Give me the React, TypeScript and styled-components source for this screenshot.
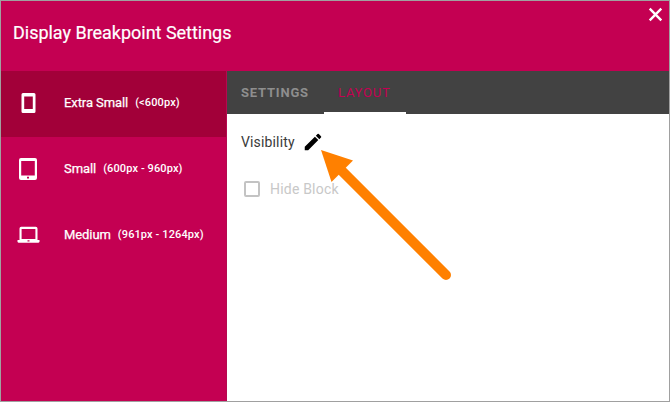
import React from "react";
import styled, { createGlobalStyle } from "styled-components";

const GlobalStyle = createGlobalStyle`
  * { box-sizing: border-box; }
  body { margin: 0; font-family: Roboto, "Liberation Sans", sans-serif; }
`;

const Dialog = styled.div`
  position: relative;
  display: flex;
  flex-direction: column;
  width: 670px;
  height: 402px;
  border: 1px solid #a0a0a0;
  background: #fff;
  overflow: hidden;
`;

const Header = styled.header`
  display: flex;
  justify-content: space-between;
  align-items: flex-start;
  height: 70px;
  flex: none;
  padding: 5px 6px 0 12px;
  background: #c40052;
`;

const Title = styled.h1`
  margin: 16px 0 0;
  font-size: 18px;
  line-height: 22px;
  font-weight: 400;
  letter-spacing: -0.02px;
  color: #fff;
  -webkit-text-stroke: 0.2px #fff;
`;

const CloseButton = styled.button`
  display: flex;
  padding: 0;
  border: 0;
  background: none;
`;

const Body = styled.div`
  display: flex;
  flex: 1;
`;

const Sidebar = styled.nav`
  width: 226px;
  background: #c40052;
  border-right: 1px solid #b6094f;
`;

const SidebarItem = styled.div<{ $active?: boolean }>`
  display: flex;
  align-items: center;
  height: 66px;
  padding: 0 0 2px 16px;
  color: #fff;
  background: ${(p) => (p.$active ? "#a20039" : "transparent")};
`;

const ItemIcon = styled.svg`
  width: 24px;
  height: 24px;
  margin-right: 23px;
  fill: #fff;
  fill-rule: evenodd;
`;

const ItemLabel = styled.span`
  font-size: 13px;
  font-weight: 400;
  letter-spacing: -0.08px;
  line-height: 20px;
  -webkit-text-stroke: 0.25px #fff;
`;

const ItemRange = styled.span`
  margin-left: 7px;
  font-size: 11px;
  font-weight: 500;
  letter-spacing: 0.12px;
  line-height: 20px;
`;

const Content = styled.main`
  flex: 1;
`;

const Tabs = styled.div`
  display: flex;
  height: 43px;
  background: #424242;
`;

const Tab = styled.div<{ $active?: boolean }>`
  display: flex;
  align-items: center;
  padding: ${(p) => (p.$active ? "2px 0 0 14px" : "0 0 0 14px")};
  width: ${(p) => (p.$active ? "82px" : "97px")};
  font-size: 13px;
  letter-spacing: 0.8px;
  font-weight: ${(p) => (p.$active ? 400 : 700)};
  color: ${(p) => (p.$active ? "#c40052" : "#8e8e8e")};
  border-bottom: ${(p) => (p.$active ? "2px solid #fff" : "0")};
`;

const Panel = styled.section`
  padding: 17px 14px;
`;

const SectionHeading = styled.div`
  display: flex;
  align-items: center;
  gap: 7px;
  height: 22px;
  font-size: 14px;
  letter-spacing: 0.15px;
  color: #3a3a3a;
`;

const CheckRow = styled.div`
  display: flex;
  align-items: center;
  height: 22px;
  margin-top: 25px;
  padding-left: 3px;
  gap: 10px;
  font-size: 14px;
  letter-spacing: 0.2px;
  color: #c8c8c8;
`;

const CheckBox = styled.span`
  width: 16px;
  height: 16px;
  border: 2px solid #c3c3c3;
  border-radius: 2px;
`;

const Arrow = styled.svg`
  position: absolute;
  left: -1px;
  top: -1px;
  pointer-events: none;
`;

const items = [
  {
    label: "Extra Small",
    range: "(<600px)",
    icon: "M6 2h11a1.5 1.5 0 0 1 1.5 1.5v17a1.5 1.5 0 0 1-1.5 1.5H6a1.500 1.500 0 0 1-1.500-1.500v-17A1.500 1.500 0 0 1 6 2zM7.200 5.500v12.500h8.600V5.500z",
  },
  {
    label: "Small",
    range: "(600px - 960px)",
    icon: "M4 1h14a2 2 0 0 1 2 2v18a2 2 0 0 1-2 2H4a2 2 0 0 1-2-2V3a2 2 0 0 1 2-2zM4.200 4v14.500h13.600V4zM10 19.700v1.900h2v-1.900z",
  },
  {
    label: "Medium",
    range: "(961px - 1264px)",
    icon: "M4.300 3.800h14.400A1.800 1.800 0 0 1 20.500 5.600v11.300h2V19l-1 .8h-20l-1-.8v-2.100h2V5.600A1.800 1.800 0 0 1 4.300 3.800zM4.600 5.900v10.100h13.800V5.900zM10.500 17.200v1.300h2v-1.300z",
  },
];

export default function App() {
  return (
    <>
      <GlobalStyle />
      <Dialog>
        <Header>
          <Title>Display Breakpoint Settings</Title>
          <CloseButton aria-label="Close">
            <svg width="16" height="16" viewBox="0 0 16 16" stroke="#fff" strokeWidth="2.4">
              <path d="M2.700 2.700 14.300 14.300M14.300 2.700 2.700 14.300" />
            </svg>
          </CloseButton>
        </Header>
        <Body>
          <Sidebar>
            {items.map((item, i) => (
              <SidebarItem key={item.label} $active={i === 0}>
                <ItemIcon viewBox="0 0 24 24">
                  <path d={item.icon} />
                </ItemIcon>
                <ItemLabel>{item.label}</ItemLabel>
                <ItemRange>{item.range}</ItemRange>
              </SidebarItem>
            ))}
          </Sidebar>
          <Content>
            <Tabs>
              <Tab>SETTINGS</Tab>
              <Tab $active>LAYOUT</Tab>
            </Tabs>
            <Panel>
              <SectionHeading>
                Visibility
                <svg width="22" height="22" viewBox="0 0 24 24" fill="#000">
                  <path d="M3 17.25V21h3.75L17.81 9.94l-3.75-3.75L3 17.25zM20.71 7.04a1 1 0 0 0 0-1.41l-2.34-2.34a1 1 0 0 0-1.41 0l-1.83 1.83 3.75 3.75 1.83-1.83z" />
                </svg>
              </SectionHeading>
              <CheckRow>
                <CheckBox />
                Hide Block
              </CheckRow>
            </Panel>
          </Content>
        </Body>
        <Arrow width="670" height="402" viewBox="0 0 670 402">
          <path d="M342 171 446 275" stroke="#ff8000" strokeWidth="10" strokeLinecap="round" />
          <path d="M321 150 353 160.5 331.5 182Z" fill="#ff8000" />
        </Arrow>
      </Dialog>
    </>
  );
}
